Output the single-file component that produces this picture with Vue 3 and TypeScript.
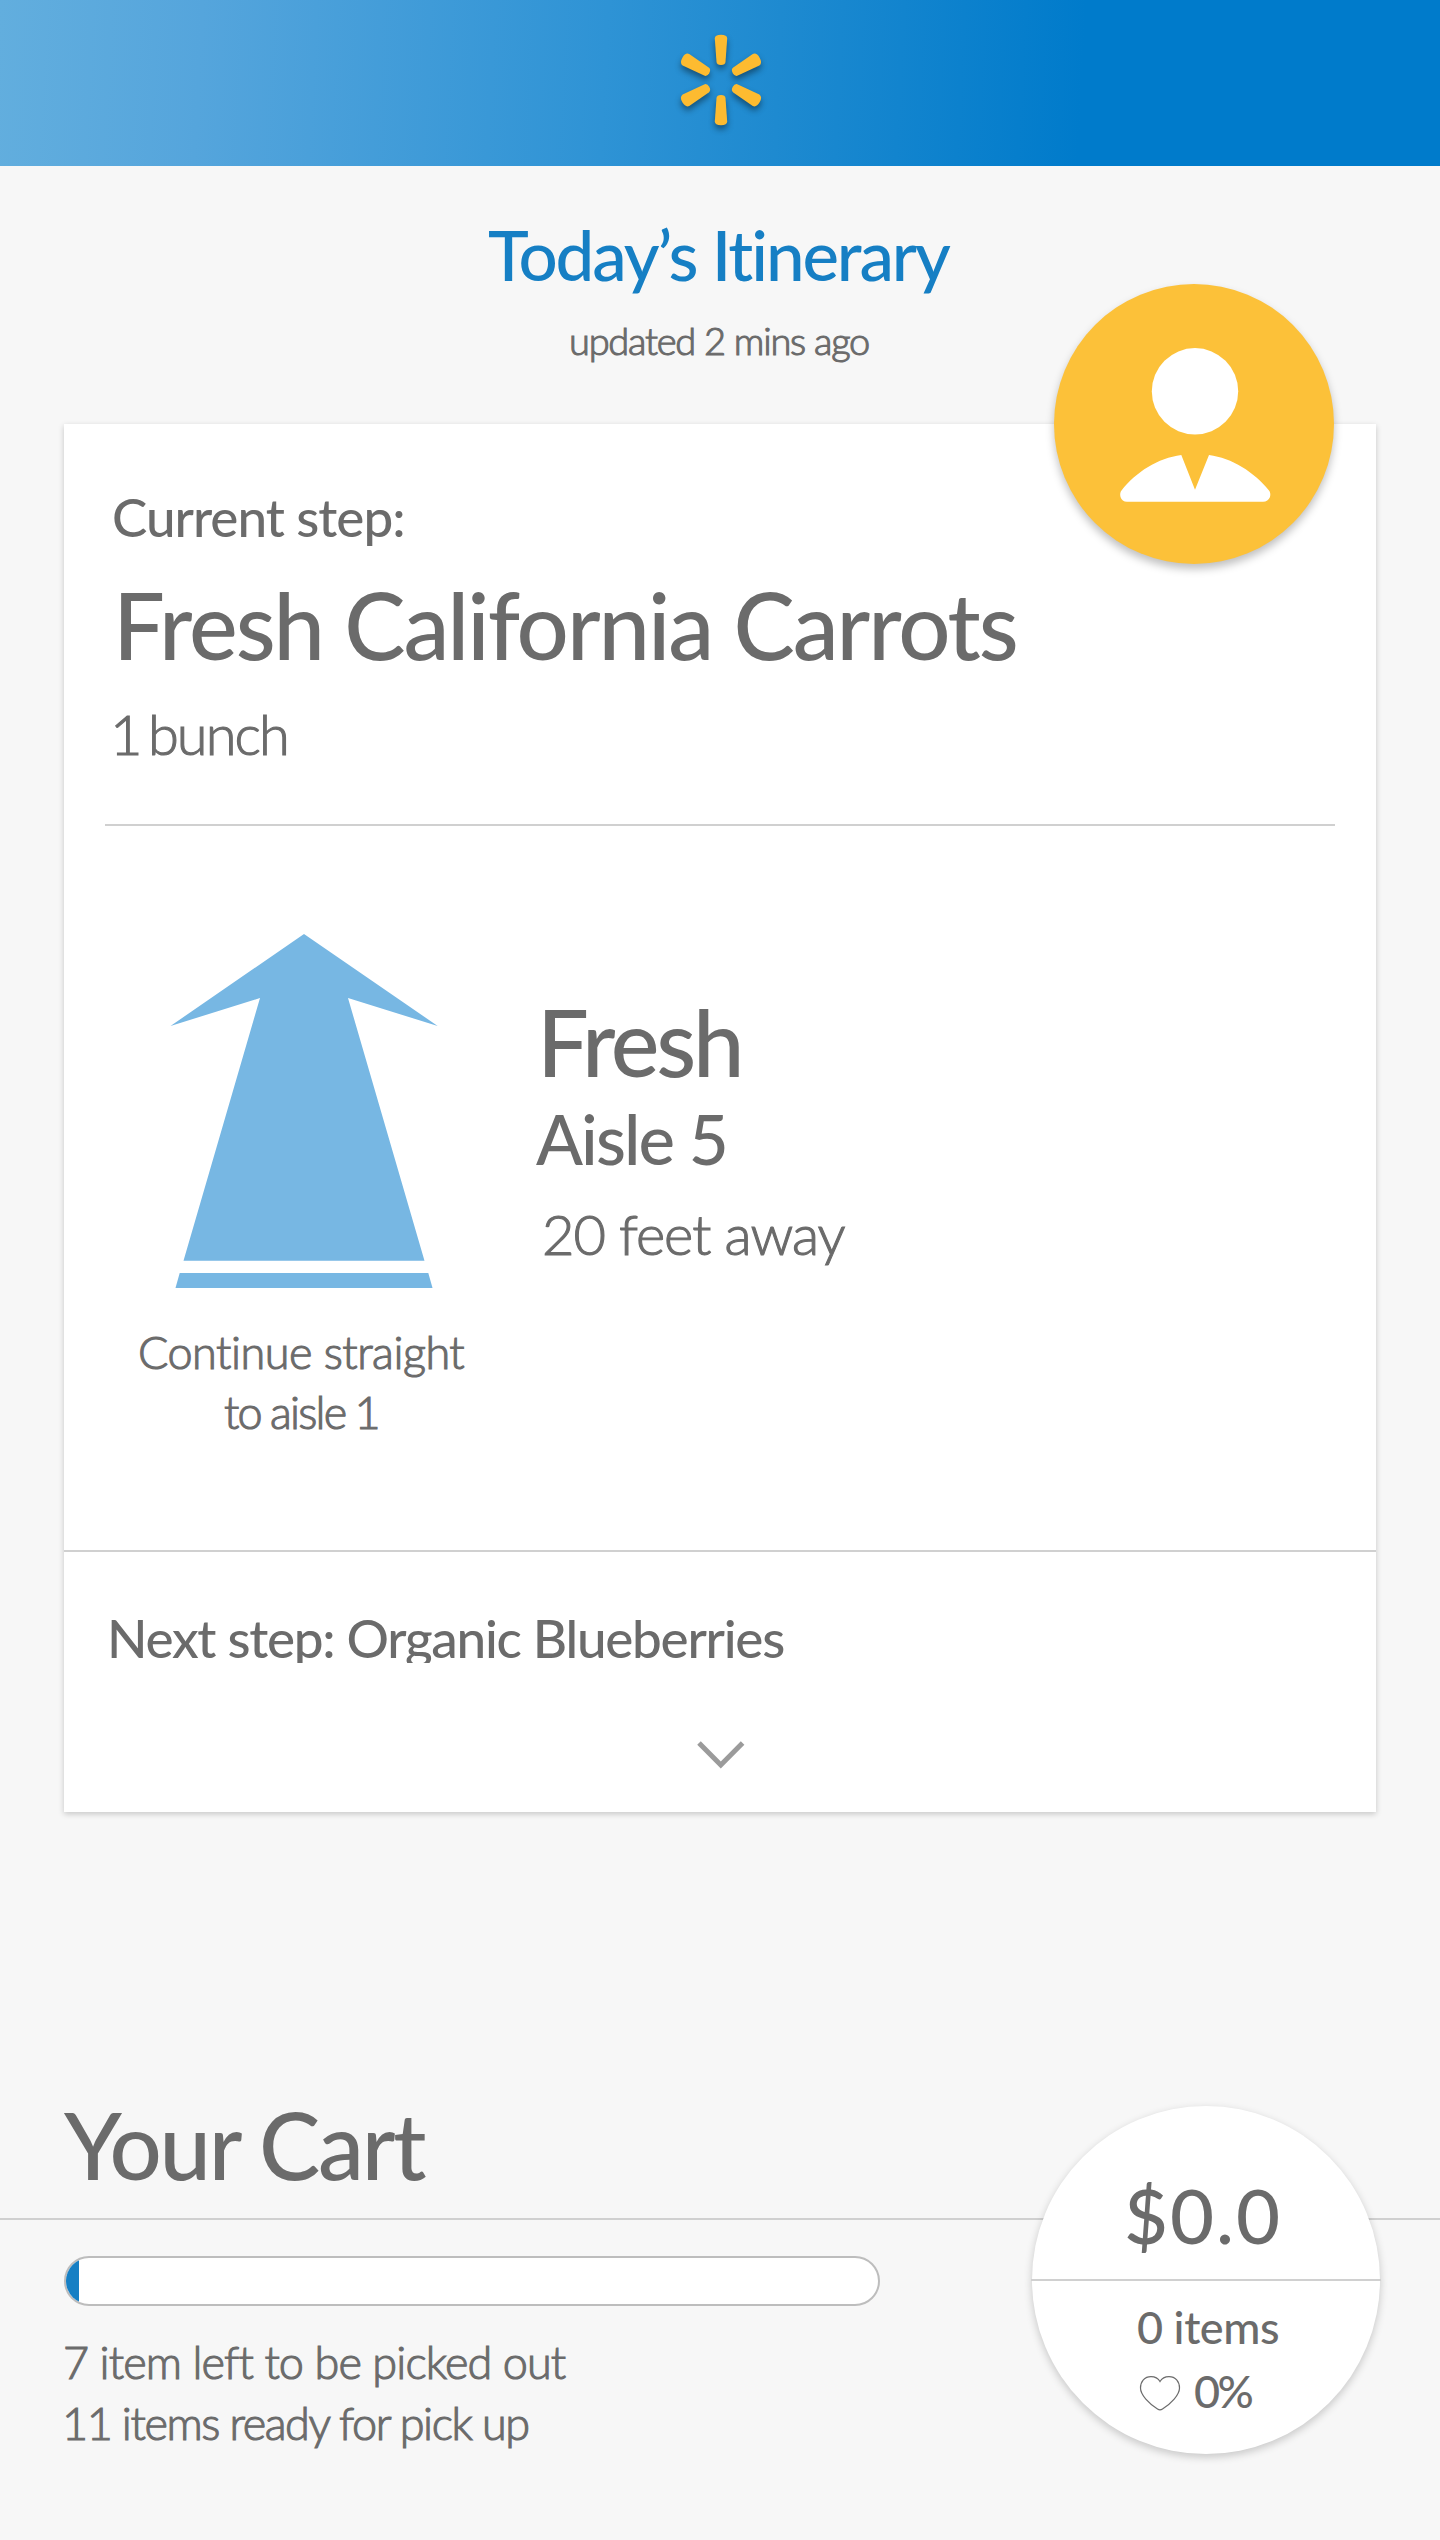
<script setup lang="ts">
interface Step {
  name: string
  quantity: string
  department: string
  aisle: string
  distance: string
}

const current: Step = {
  name: 'Fresh California Carrots',
  quantity: '1 bunch',
  department: 'Fresh',
  aisle: 'Aisle 5',
  distance: '20 feet away',
}
const nextItem = 'Organic Blueberries'
const cart = { total: '$0.0', items: 0, liked: 0, progress: 1.6, left: 7, ready: 11 }

const sideRays = [60, 120, 240, 300]
</script>

<template>
  <div class="page">
    <header class="topbar">
      <svg class="spark" width="96" height="104" viewBox="-48 -52 96 104" aria-hidden="true">
        <g fill="#fdbb30">
          <path
            v-for="a in [0, 180]"
            :key="a"
            :transform="`rotate(${a})`"
            d="M-6.2-41.5Q-6.2-45.2 0-45.2T6.2-41.5L4.5-18Q4.2-15 0-15T-4.5-18Z"
          />
          <path
            v-for="a in sideRays"
            :key="a"
            :transform="`rotate(${a})`"
            d="M-6.6-40.5Q-6.2-44.6 0-44.6T6.6-40.5L4.6-16.8Q4.2-13.6 0-13.6T-4.6-16.8Z"
          />
        </g>
      </svg>
    </header>

    <section class="intro">
      <h1 class="title">Today’s Itinerary</h1>
      <p class="updated light">updated 2 mins ago</p>
    </section>

    <main class="card">
      <div class="avatar">
        <svg width="280" height="280" viewBox="0 0 280 280" aria-hidden="true">
          <g fill="#fff">
            <circle cx="141" cy="107.3" r="43.2" />
            <path
              d="M127.3 171 141 205.7 155 171C178 174 200 188 215 206.500Q217 209 216 213Q214 217.700 209 217.700H73Q68 217.700 66.500 213Q65.500 209 67.500 206.500C82 188 104 174 127.300 171Z"
            />
          </g>
        </svg>
      </div>

      <div class="step">
        <p class="label">Current step:</p>
        <h2 class="name">{{ current.name }}</h2>
        <p class="quantity light">{{ current.quantity }}</p>
      </div>

      <div class="route">
        <div class="direction">
          <svg class="arrow" width="268" height="354" viewBox="0 0 268 354" aria-hidden="true">
            <path fill="#77b7e3" d="M134 0 267.700 92 178 64 254.500 326.700H13.500L90 64 .5 92Z" />
            <path fill="#77b7e3" d="M9.700 339H258.300L262.500 354H5.500Z" />
          </svg>
          <p class="hint light">Continue straight</p>
          <p class="hint hint-second light">to aisle 1</p>
        </div>
        <div class="place">
          <p class="department">{{ current.department }}</p>
          <p class="aisle">{{ current.aisle }}</p>
          <p class="distance light">{{ current.distance }}</p>
        </div>
      </div>

      <div class="next">
        <p class="next-step">Next step: {{ nextItem }}</p>
        <svg class="chevron" width="48" height="28" viewBox="0 0 48 28" aria-hidden="true">
          <path d="M2 2 23.800 24 45.600 2" fill="none" stroke="#9b9b9b" stroke-width="5" />
        </svg>
      </div>
    </main>

    <section class="cart">
      <h2 class="cart-title">Your Cart</h2>
      <div class="rule"></div>
      <div class="bar"><div class="fill" :style="{ width: cart.progress + '%' }"></div></div>
      <p class="note light">{{ cart.left }} item left to be picked out</p>
      <p class="note ready light">{{ cart.ready }} items ready for pick up</p>

      <div class="summary">
        <p class="total">{{ cart.total }}</p>
        <div class="split"></div>
        <p class="items">{{ cart.items }} items</p>
        <div class="liked">
          <svg width="42" height="36" viewBox="0 0 42 36" aria-hidden="true">
            <path
              d="M21 6.500C23 3 26.500 1.600 30 1.600C36.500 1.600 40.500 6.500 40.500 13C40.500 20 32 28.500 23.500 34Q21 35.700 18.500 34C10 28.500 1.500 20 1.500 13C1.500 6.500 5.500 1.600 12 1.600C15.500 1.600 19 3 21 6.500Z"
              fill="none"
              stroke="#6b6b6b"
              stroke-width="1.2"
            />
          </svg>
          <span class="percent">{{ cart.liked }}%</span>
        </div>
      </div>
    </section>
  </div>
</template>

<style>
body {
  background: #f7f7f7;
}
</style>

<style scoped>
.page {
  width: 1440px;
  height: 2540px;
  overflow: hidden;
  background: #f7f7f7;
  color: #6b6b6b;
  font-family: Lato, 'Liberation Sans', sans-serif;
  font-weight: 500;
}
h1,
h2,
p {
  margin: 0;
  font-weight: inherit;
  white-space: nowrap;
}
svg {
  display: block;
}
.light {
  font-weight: 300;
  -webkit-text-stroke: 1.1px currentColor;
}

.topbar {
  height: 166px;
  display: flex;
  background: linear-gradient(93deg, #62aede 0%, #55a5dc 14%, #2e93d5 42%, #1e8ad0 54%, #007bcb 75%);
}
.spark {
  margin: 28px 0 0 673px;
  overflow: visible;
  filter: drop-shadow(0 4px 3px rgba(0, 0, 0, 0.42));
}

.intro {
  height: 258px;
  box-sizing: border-box;
  padding-top: 47px;
}
.title {
  padding-left: 488px;
  font-size: 69px;
  line-height: 84px;
  letter-spacing: -2.1px;
  color: #167fc4;
}
.updated {
  margin-top: 20px;
  padding-left: 569px;
  font-size: 38px;
  line-height: 46px;
  letter-spacing: -1.25px;
}

.card {
  position: relative;
  width: 1312px;
  height: 1388px;
  margin: 0 64px;
  background: #fff;
  box-shadow: 0 2px 6px rgba(0, 0, 0, 0.2);
}
.avatar {
  position: absolute;
  top: -140px;
  left: 990px;
  width: 280px;
  height: 280px;
  border-radius: 50%;
  background: #fcc139;
  box-shadow: 0 5px 8px rgba(0, 0, 0, 0.25);
}
.step {
  height: 402px;
  box-sizing: border-box;
  margin: 0 41px;
  padding-top: 61px;
  border-bottom: 2px solid #d0d0d0;
}
.label {
  padding-left: 7px;
  font-size: 53px;
  line-height: 64px;
  letter-spacing: -1px;
}
.name {
  margin-top: 20px;
  padding-left: 8px;
  font-size: 92px;
  line-height: 112px;
  letter-spacing: -2.05px;
}
.quantity {
  margin-top: 19px;
  padding-left: 5px;
  font-size: 56px;
  line-height: 68px;
  letter-spacing: -1.9px;
  word-spacing: -6px;
}

.route {
  height: 724px;
  display: flex;
}
.direction {
  width: 472px;
  padding-top: 108px;
}
.arrow {
  margin-left: 106px;
}
.hint {
  padding-left: 74px;
  font-size: 45px;
  line-height: 60px;
  letter-spacing: -0.5px;
}
.arrow + .hint {
  margin-top: 34px;
}
.hint-second {
  padding-left: 160px;
  letter-spacing: -1.75px;
  word-spacing: -1.5px;
}
.place {
  padding-top: 160px;
}
.department {
  padding-left: 1px;
  font-size: 92px;
  line-height: 112px;
  letter-spacing: -3.2px;
}
.aisle {
  font-size: 69px;
  line-height: 81px;
  letter-spacing: -1.9px;
}
.distance {
  margin-top: 21px;
  padding-left: 6px;
  font-size: 56px;
  line-height: 68px;
  letter-spacing: -1.04px;
}

.next {
  height: 262px;
  box-sizing: border-box;
  padding-top: 54px;
  border-top: 2px solid #d0d0d0;
}
.next-step {
  height: 57px;
  overflow: hidden;
  padding-left: 43px;
  font-size: 53px;
  line-height: 64px;
  letter-spacing: -1.26px;
}
.chevron {
  margin: 78px 0 0 633px;
}

.cart {
  position: relative;
  height: 728px;
  box-sizing: border-box;
  padding-top: 277px;
}
.cart-title {
  padding-left: 64px;
  font-size: 92px;
  line-height: 112px;
  letter-spacing: -2.3px;
}
.rule {
  height: 2px;
  margin-top: 17px;
  background: #d0d0d0;
}
.bar {
  width: 816px;
  height: 50px;
  box-sizing: border-box;
  margin: 36px 0 26px 64px;
  border: 2px solid #bdbdbd;
  border-radius: 25px;
  background: #fff;
  overflow: hidden;
}
.fill {
  height: 100%;
  background: #167fc4;
}
.note {
  padding-left: 63px;
  font-size: 45px;
  line-height: 61px;
  letter-spacing: -0.87px;
}
.ready {
  padding-left: 62px;
  letter-spacing: -1.4px;
  word-spacing: -0.4px;
}

.summary {
  position: absolute;
  top: 294px;
  left: 1032px;
  width: 348px;
  height: 348px;
  box-sizing: border-box;
  padding-top: 63px;
  border-radius: 50%;
  background: #fff;
  box-shadow: 0 3px 8px rgba(0, 0, 0, 0.2);
}
.total {
  padding-left: 92px;
  font-size: 76px;
  line-height: 92px;
  letter-spacing: 1.97px;
}
.split {
  height: 2px;
  margin: 18px -1px 19px;
  background: #d0d0d0;
}
.items {
  padding-left: 105px;
  font-size: 45px;
  line-height: 54px;
  letter-spacing: -0.43px;
}
.liked {
  display: flex;
  margin-top: 10px;
  padding-left: 107px;
}
.liked svg {
  margin-top: 11px;
}
.percent {
  margin-left: 13px;
  font-size: 45px;
  line-height: 54px;
  letter-spacing: -2.6px;
}
</style>
